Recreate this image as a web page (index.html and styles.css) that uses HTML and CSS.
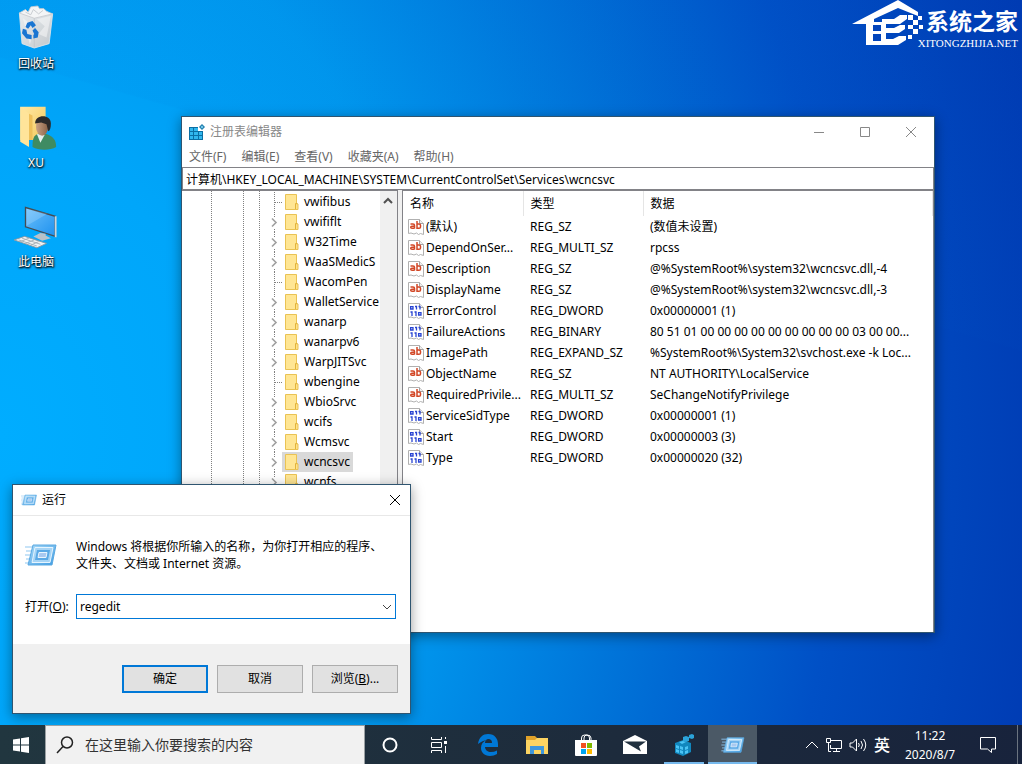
FILE: index.html
```html
<!DOCTYPE html>
<html lang="zh-CN">

<head>
  <meta charset="UTF-8">
  <meta name="viewport" content="width=device-width, initial-scale=1.0">
  <title>注册表编辑器</title>
  <link rel="stylesheet" href="styles.css">
</head>

<body>
  <!-- 图标定义 -->
  <svg class="defs" width="0" height="0" aria-hidden="true">
    <defs>
      <linearGradient id="g-bin" x1="0" y1="0" x2="1" y2="1">
        <stop offset="0" stop-color="#e9edf0"/>
        <stop offset="1" stop-color="#c3c8cc"/>
      </linearGradient>
      <linearGradient id="g-folder" x1="0" y1="0" x2="1" y2="1">
        <stop offset="0" stop-color="#ffe9a6"/>
        <stop offset="1" stop-color="#f3c95c"/>
      </linearGradient>
      <linearGradient id="g-screen" x1="0" y1="0" x2="1" y2="1">
        <stop offset="0" stop-color="#6cc0fb"/>
        <stop offset="1" stop-color="#1d91ef"/>
      </linearGradient>
      <linearGradient id="g-face" x1="0" y1="0" x2="1" y2="0">
        <stop offset="0" stop-color="#c9a184"/>
        <stop offset="1" stop-color="#8a6247"/>
      </linearGradient>
      <linearGradient id="g-run" x1="0" y1="0" x2="1" y2="1">
        <stop offset="0" stop-color="#a9daf8"/>
        <stop offset="1" stop-color="#3e9be2"/>
      </linearGradient>
    </defs>

    <symbol id="i-branch" viewBox="0 0 18 20">
      <path d="M10.500 0v5M10.500 17v3" stroke="#808080" stroke-dasharray="1 1" fill="none"/>
      <path d="M8 6.500l4 4-4 4" stroke="#a0a0a0" stroke-width="1.600" fill="none"/>
    </symbol>
    <symbol id="i-leaf" viewBox="0 0 18 20">
      <path d="M10.500 0v20M11 10.500h7" stroke="#808080" stroke-dasharray="1 1" fill="none"/>
    </symbol>
    <symbol id="i-folder" viewBox="0 0 14 16">
      <path d="M.5.500h11v9.500h1.500v5.500H.5z" fill="#ffe28a" stroke="#eac354"/>
      <path d="M1 1h10v8l-1 6H1z" fill="#ffe694"/>
      <path d="M10.500 15V9.500h2" stroke="#e2b43c" fill="none"/>
    </symbol>
    <symbol id="i-page" viewBox="0 0 16 16">
      <path d="M.5.500h11l4 4v11l-3-1-2 1-2-1.500-2.500 1-3-1-2.500.5z" fill="#fff" stroke="#b0b0b0"/>
      <path d="M11.500.500v4h4" fill="#eee" stroke="#a3a3a3"/>
    </symbol>
    <symbol id="i-string" viewBox="0 0 16 16">
      <use href="#i-page"/>
      <path d="M2.500 5h2.500q1.500 0 1.500 1.500v3M6.500 7.300H4q-1.300 0-1.300 1T4 9.300h2.500M9 2v7.300h2q1.500 0 1.500-1.300V6.300q0-1.300-1.500-1.300H9" stroke="#d24726" stroke-width="1.500" fill="none"/>
    </symbol>
    <symbol id="i-binary" viewBox="0 0 16 16">
      <use href="#i-page"/>
      <path d="M2.600 3.600h2.400v2.400H2.600zM7 3.500h1.500v3M10.500 3.500H12v3M2.500 9H4v4M6.500 9H8v4M10.600 9.600H13V12h-2.400z" stroke="#2743d2" stroke-width="1.300" fill="none"/>
    </symbol>
    <symbol id="i-regedit" viewBox="0 0 16 16">
      <path d="M0 3h14v13H0z" fill="#0b6fa4"/>
      <path d="M1 4h3v3H1zM5 4h4v3H5zM1 8h3v3H1zM5 8h4v3H5zM10 8h3v3h-3zM1 12h3v3H1zM5 12h4v3H5zM10 12h3v3h-3z" fill="#31b7ee"/>
      <path d="M9 2h6v5H9z" fill="#fff"/>
      <path d="M13 0l3 3-3 3-3-3z" fill="#1a78a8"/>
      <path d="M13 1.500L14.500 3 13 4.500 11.500 3z" fill="#7dd0f2"/>
    </symbol>
    <symbol id="i-run" viewBox="0 0 32 22">
      <path d="M0 3h9M1 7h7M0 11h6M1 15h5M0 19h5" stroke="#8fc8f2" stroke-width="1.200"/>
      <path d="M8 1h23l-4 20H3z" fill="url(#g-run)" stroke="#5aa9e2"/>
      <path d="M10 3.500h18l-3 15H7z" fill="#a6d4f5" stroke="#e6f5ff"/>
      <path d="M12 6h13l-2 10H10z" fill="#5aa9e6"/>
      <path d="M14 8.500h8l-1 5h-8z" fill="#a9c9f0" stroke="#e8f5fe"/>
    </symbol>
  </svg>

  <main class="desktop">
    <!-- 桌面图标 -->
    <nav class="shortcuts">
      <a class="shortcut" href="#">
        <svg width="48" height="48" viewBox="0 0 48 48">
          <path d="M5 8l38 1-4 34-17 5L8 43z" fill="url(#g-bin)" stroke="#dfe5ea"/>
          <path d="M5 8l7-4 3 3 3-6 8-1 2 3 5 0 3 3 7 3-21 5z" fill="#f4f5f6" stroke="#c9ccd0"/>
          <path d="M12 7l6 3 3-6 6 5 5-4M22 14v33" stroke="#c2c6ca" fill="none"/>
          <path d="M25 15l9 8-7 9 9 4 5-25zM9 14l8 6-7 8 9 9-2 7" fill="#fff" opacity=".45"/>
          <path d="M14 19l6-2 4 5-4 3-2-3-3 4-3-2zM23 25l4 5-1 6-5 1 0-4 1-1-2-4zM9 26l4 1 1 5 5 1 0 5-6-1-5-6z" fill="#1975d2"/>
        </svg>
        <span>回收站</span>
      </a>
      <a class="shortcut" href="#">
        <svg width="48" height="48" viewBox="0 0 48 48">
          <path d="M6 2h29v38H6z" fill="url(#g-folder)"/>
          <path d="M6 2l10 8v38L6 42z" fill="#ffe49a"/>
          <path d="M16 10v30h4V12z" fill="#eec05a"/>
          <path d="M20 48c0-10 1-13 8-16l8 1c8 3 11 7 11 15-7 4-20 4-27 0z" fill="#3f8b62"/>
          <path d="M25 33l4 10 5-9z" fill="#e8efec"/>
          <ellipse cx="31" cy="25" rx="7" ry="10" fill="url(#g-face)"/>
          <path d="M23 21c0-11 18-11 18 0 0 5-1 8-3 9l-2-8-6-2z" fill="#2d2a29"/>
        </svg>
        <span>XU</span>
      </a>
      <a class="shortcut" href="#">
        <svg width="48" height="48" viewBox="0 0 48 48">
          <path d="M12 4l34 10v23L12 26z" fill="url(#g-screen)" stroke="#444c54" stroke-width="1.500"/>
          <path d="M13 25L37 11l-24-6z" fill="#fff" opacity=".18"/>
          <path d="M46.500 14v24" stroke="#cfd3d6" stroke-width="2"/>
          <path d="M29 33l-8 4 10 5 10-3-6-3v-2z" fill="#b8c1c8"/>
          <path d="M-1 41l12-4 25 8-11 5z" fill="#f0f2f3" stroke="#8d969d"/>
          <path d="M4 41l21 7M8 39l21 7M6 43l10-4M12 45l10-4M18 47l9-4" stroke="#a4adb4"/>
        </svg>
        <span>此电脑</span>
      </a>
    </nav>

    <!-- 水印 -->
    <div class="brand">
      <svg width="72" height="48" viewBox="0 0 72 48">
        <path d="M0 24L46 0l20 12v4L46 8 22 19v3h12v23H14V24z" fill="#fff"/>
        <path d="M30 19h12l6-4h7v4l-7 5H30zM30 28h12l6-3h5v4l-6 4H30zM30 39h11l6-3h7v4l-8 5H30z" fill="#fff"/>
        <path d="M21 25h8v6h-8zM21 34h8v7h-8z" fill="#0345bb"/>
        <path d="M56 15h5v5h-5zM61 20h5v5h-5zM66 16h4v4h-4zM56 25h5v4h-5zM61 29h5v5h-5zM67 25h4v4h-4zM56 35h4v4h-4z" fill="#fff"/>
      </svg>
      <div class="brand-text">
        <strong>系统之家</strong>
        <small>XITONGZHIJIA.NET</small>
      </div>
    </div>

    <!-- 注册表编辑器 -->
    <section class="window regedit">
      <header class="titlebar">
        <svg width="16" height="16"><use href="#i-regedit"/></svg>
        <h1>注册表编辑器</h1>
        <button type="button" aria-label="最小化"><svg width="12" height="12"><path d="M1 6.500h10"/></svg></button>
        <button type="button" aria-label="最大化"><svg width="12" height="12"><path d="M1.500 1.500h9v9h-9z"/></svg></button>
        <button type="button" aria-label="关闭"><svg width="12" height="12"><path d="M1 1l10 10M11 1L1 11"/></svg></button>
      </header>
      <nav class="menubar">
        <a href="#">文件(F)</a>
        <a href="#">编辑(E)</a>
        <a href="#">查看(V)</a>
        <a href="#">收藏夹(A)</a>
        <a href="#">帮助(H)</a>
      </nav>
      <input class="address" type="text" aria-label="地址" value="计算机\HKEY_LOCAL_MACHINE\SYSTEM\CurrentControlSet\Services\wcncsvc">
      <div class="panes">
        <div class="tree">
          <ul>
            <li><svg class="branch"><use href="#i-leaf"/></svg><span><svg class="folder"><use href="#i-folder"/></svg>vwifibus</span></li>
            <li><svg class="branch"><use href="#i-branch"/></svg><span><svg class="folder"><use href="#i-folder"/></svg>vwififlt</span></li>
            <li><svg class="branch"><use href="#i-branch"/></svg><span><svg class="folder"><use href="#i-folder"/></svg>W32Time</span></li>
            <li><svg class="branch"><use href="#i-branch"/></svg><span><svg class="folder"><use href="#i-folder"/></svg>WaaSMedicS</span></li>
            <li><svg class="branch"><use href="#i-leaf"/></svg><span><svg class="folder"><use href="#i-folder"/></svg>WacomPen</span></li>
            <li><svg class="branch"><use href="#i-branch"/></svg><span><svg class="folder"><use href="#i-folder"/></svg>WalletService</span></li>
            <li><svg class="branch"><use href="#i-branch"/></svg><span><svg class="folder"><use href="#i-folder"/></svg>wanarp</span></li>
            <li><svg class="branch"><use href="#i-branch"/></svg><span><svg class="folder"><use href="#i-folder"/></svg>wanarpv6</span></li>
            <li><svg class="branch"><use href="#i-branch"/></svg><span><svg class="folder"><use href="#i-folder"/></svg>WarpJITSvc</span></li>
            <li><svg class="branch"><use href="#i-leaf"/></svg><span><svg class="folder"><use href="#i-folder"/></svg>wbengine</span></li>
            <li><svg class="branch"><use href="#i-branch"/></svg><span><svg class="folder"><use href="#i-folder"/></svg>WbioSrvc</span></li>
            <li><svg class="branch"><use href="#i-branch"/></svg><span><svg class="folder"><use href="#i-folder"/></svg>wcifs</span></li>
            <li><svg class="branch"><use href="#i-branch"/></svg><span><svg class="folder"><use href="#i-folder"/></svg>Wcmsvc</span></li>
            <li class="selected"><svg class="branch"><use href="#i-branch"/></svg><span><svg class="folder"><use href="#i-folder"/></svg>wcncsvc</span></li>
            <li><svg class="branch"><use href="#i-branch"/></svg><span><svg class="folder"><use href="#i-folder"/></svg>wcnfs</span></li>
          </ul>
          <div class="scrollbar">
            <svg width="10" height="8"><path d="M1 6l4-4 4 4" fill="none" stroke="#505050" stroke-width="2"/></svg>
          </div>
        </div>
        <div class="values">
          <table>
            <thead>
              <tr><th class="col-name">名称</th><th class="col-type">类型</th><th>数据</th></tr>
            </thead>
            <tbody>
              <tr><td><svg><use href="#i-string"/></svg>(默认)</td><td>REG_SZ</td><td>(数值未设置)</td></tr>
              <tr><td><svg><use href="#i-string"/></svg>DependOnSer...</td><td>REG_MULTI_SZ</td><td>rpcss</td></tr>
              <tr><td><svg><use href="#i-string"/></svg>Description</td><td>REG_SZ</td><td>@%SystemRoot%\system32\wcncsvc.dll,-4</td></tr>
              <tr><td><svg><use href="#i-string"/></svg>DisplayName</td><td>REG_SZ</td><td>@%SystemRoot%\system32\wcncsvc.dll,-3</td></tr>
              <tr><td><svg><use href="#i-binary"/></svg>ErrorControl</td><td>REG_DWORD</td><td>0x00000001 (1)</td></tr>
              <tr><td><svg><use href="#i-binary"/></svg>FailureActions</td><td>REG_BINARY</td><td>80 51 01 00 00 00 00 00 00 00 00 00 03 00 00...</td></tr>
              <tr><td><svg><use href="#i-string"/></svg>ImagePath</td><td>REG_EXPAND_SZ</td><td>%SystemRoot%\System32\svchost.exe -k Loc...</td></tr>
              <tr><td><svg><use href="#i-string"/></svg>ObjectName</td><td>REG_SZ</td><td>NT AUTHORITY\LocalService</td></tr>
              <tr><td><svg><use href="#i-string"/></svg>RequiredPrivile...</td><td>REG_MULTI_SZ</td><td>SeChangeNotifyPrivilege</td></tr>
              <tr><td><svg><use href="#i-binary"/></svg>ServiceSidType</td><td>REG_DWORD</td><td>0x00000001 (1)</td></tr>
              <tr><td><svg><use href="#i-binary"/></svg>Start</td><td>REG_DWORD</td><td>0x00000003 (3)</td></tr>
              <tr><td><svg><use href="#i-binary"/></svg>Type</td><td>REG_DWORD</td><td>0x00000020 (32)</td></tr>
            </tbody>
          </table>
        </div>
      </div>
    </section>

    <!-- 运行对话框 -->
    <form class="window run">
      <header class="titlebar">
        <svg width="16" height="12"><use href="#i-run"/></svg>
        <h2>运行</h2>
        <button type="button" aria-label="关闭"><svg width="12" height="12"><path d="M1 1l10 10M11 1L1 11"/></svg></button>
      </header>
      <div class="run-body">
        <div class="run-hint">
          <svg width="32" height="22"><use href="#i-run"/></svg>
          <p>Windows 将根据你所输入的名称，为你打开相应的程序、<br>文件夹、文档或 Internet 资源。</p>
        </div>
        <div class="run-field">
          <label for="cmd">打开(<u>O</u>):</label>
          <div class="combo">
            <input id="cmd" type="text" value="regedit">
            <svg width="10" height="8"><path d="M1 2l4 4 4-4" fill="none" stroke="#444"/></svg>
          </div>
        </div>
      </div>
      <footer class="run-actions">
        <button type="submit" class="default">确定</button>
        <button type="button">取消</button>
        <button type="button">浏览(<u>B</u>)...</button>
      </footer>
    </form>
  </main>

  <!-- 任务栏 -->
  <footer class="taskbar">
    <button type="button" class="start" aria-label="开始">
      <svg width="16" height="16"><path d="M0 2.500L7 1.500V7.500H0zM8 1.300L16 0v7.500H8zM0 8.500h7v6l-7-1zM8 8.500h8V16l-8-1.200z" fill="#fff"/></svg>
    </button>
    <div class="search">
      <svg width="18" height="18"><circle cx="11" cy="6.500" r="5.500"/><path d="M7 10.500L1 17"/></svg>
      <input type="text" aria-label="搜索" placeholder="在这里输入你要搜索的内容">
    </div>
    <div class="apps">
      <button type="button" aria-label="Cortana"><svg width="16" height="16"><circle cx="8" cy="8" r="6.500" fill="none" stroke="#fff" stroke-width="2"/></svg></button>
      <button type="button" aria-label="任务视图">
        <svg width="18" height="16"><path d="M1.500 0v2.500h10V0M1.500 5.500h10v5h-10zM1.500 16v-2.500h10V16M15.500 0v2M15.500 9v7" fill="none" stroke="#fff"/><path d="M14 4h3v3h-3z" fill="#fff"/></svg>
      </button>
      <button type="button" aria-label="Edge">
        <svg width="22" height="22"><path d="M1 10C2 3 6 0 11 0c7 0 10 5 10 10v3H8c0 3 3 5 6 5 2 0 4-.5 6-1.500V20c-2 1.300-4.500 2-7 2-6 0-9-4-9-8 0-4 2-6.500 6-8-3 .5-6 1.500-9 4zM8 9h7c0-3-1.500-4-3.500-4S8.200 6.500 8 9z" fill="#0078d7"/></svg>
      </button>
      <button type="button" aria-label="文件资源管理器">
        <svg width="22" height="18"><path d="M0 0h9l2 2h10v15H0z" fill="#e0a22a"/><path d="M0 4h9l2-2h11v16H0z" fill="#fcd462"/><path d="M4 18v-8h14v8h-3v-4H8v4z" fill="#3e97dc"/></svg>
      </button>
      <button type="button" aria-label="应用商店">
        <svg width="24" height="22"><path d="M7.500 8V4q0-3 3-3h2q3 0 3 3v4M10 8V4q0-3 3-3 4 0 4 3v3" fill="none" stroke="#fff"/><path d="M1 6h22v15q0 1-1 1H2q-1 0-1-1z" fill="#fff"/><path d="M7 9h5v5H7z" fill="#f25022"/><path d="M13 9h5v5h-5z" fill="#7fba00"/><path d="M7 15h5v5H7z" fill="#00a4ef"/><path d="M13 15h5v5h-5z" fill="#ffb900"/></svg>
      </button>
      <button type="button" aria-label="邮件">
        <svg width="24" height="19"><path d="M0 6L12 0l12 6v13H0z" fill="#fff"/><path d="M1 6.500l22 0-7 5 2 5z" fill="#20303f"/></svg>
      </button>
      <button type="button" class="open" aria-label="注册表编辑器">
        <svg width="20" height="22"><path d="M1 9l8-3 8 3v9l-8 4-8-3z" fill="#1187be"/><path d="M2 11l3 1v3l-3-1zM6 12l3 1v3l-3-1zM2 15l3 1v3l-3-1zM6 16l3 1v3l-3-1zM11 13l3-1v3l-3 1zM11 17l3-1v3l-3 1zM5 8l4-1 3 1-4 2z" fill="#4bc4f5"/><path d="M9 3l3-1 3 1v4l-3 1-3-1zM15 1l3-1 2 1v3l-2 1-3-1z" fill="#2ba3da"/></svg>
      </button>
      <button type="button" class="open active" aria-label="运行">
        <svg width="24" height="16"><use href="#i-run"/></svg>
      </button>
    </div>
    <div class="tray">
      <svg width="14" height="8"><path d="M1 7l6-6 6 6"/></svg>
      <svg width="16" height="14"><path d="M5 2.500h10.500v8H4.500V7M10.500 10.500v3M7 13.500h7M.5.500h4v4h-4zM2.500 5v8.500H5"/></svg>
      <svg width="18" height="14"><path d="M1 5h2.500l4-4v12l-4-4H1zM9.500 5q1.500 2 0 4M12 3q3 4 0 8M14.500 1q4.500 6 0 12"/></svg>
      <span class="ime">英</span>
      <time datetime="2020-08-07T11:22">11:22<br>2020/8/7</time>
      <svg class="notice" width="18" height="16"><path d="M1.500.500h15v11.500h-4V15.500L8.500 12h-7z"/></svg>
      <button type="button" class="show-desktop" aria-label="显示桌面"></button>
    </div>
  </footer>
</body>

</html>
```
FILE: styles.css
```css
/* 全局 */
* {
  box-sizing: border-box;
}

body {
  display: flex;
  flex-direction: column;
  height: 100vh;
  margin: 0;
  overflow: hidden;
  font: 12px/16px "Noto Sans", "Noto Sans CJK SC", sans-serif;
  color: #000;
}

button,
input {
  font: inherit;
  color: inherit;
}

a {
  color: inherit;
  text-decoration: none;
}

h1,
h2,
p,
ul {
  margin: 0;
  padding: 0;
  font: inherit;
}

.defs {
  position: absolute;
}

/* 桌面 */
.desktop {
  position: relative;
  flex: 1;
  overflow: hidden;
  background:
    linear-gradient(196deg, rgba(0, 90, 200, .04) 336px, rgba(0, 90, 200, 0) 338px),
    radial-gradient(ellipse 100% 180% at 0 60%, #00adff 0, #00a6fa 22%, #0098ee 42%, #006fd6 65%, #0050c6 82%, #003ab2 105%);
}

.shortcuts {
  display: flex;
  flex-direction: column;
  gap: 33px;
  width: 72px;
  padding-top: 6px;
}

.shortcut {
  display: flex;
  flex-direction: column;
  align-items: center;
  gap: 8px;
  color: #fff;
  text-shadow: 0 1px 2px #000, 1px 1px 2px #000;
}

.shortcut svg {
  width: 42px;
  height: 42px;
  overflow: visible;
}

.brand {
  position: absolute;
  top: 0;
  right: 4px;
  display: flex;
  color: #fff;
}

.brand-text {
  display: flex;
  flex-direction: column;
  align-items: flex-end;
  margin-left: -6px;
  padding-top: 3px;
}

.brand strong {
  font: bold 23px/34px "Noto Sans CJK SC", sans-serif;
}

.brand small {
  font: 11px/12px "Liberation Serif", serif;
}

/* 窗口 */
.window {
  position: absolute;
  display: flex;
  flex-direction: column;
  background: #fff;
  border: 1px solid #2f5570;
  box-shadow: 0 3px 12px rgba(0, 0, 0, .4);
}

.titlebar {
  display: flex;
  align-items: center;
}

.titlebar h1,
.titlebar h2 {
  flex: 1;
  padding-left: 5px;
}

.titlebar button {
  display: grid;
  place-items: center;
  padding: 0;
  border: 0;
  background: none;
}

.titlebar button svg {
  fill: none;
  stroke: currentColor;
}

/* 注册表编辑器 */
.regedit {
  top: 116px;
  right: 87px;
  bottom: 92px;
  left: 181px;
}

.regedit .titlebar {
  height: 30px;
  padding-left: 7px;
  color: #888;
}

.regedit .titlebar button {
  width: 46px;
  height: 28px;
}

.menubar {
  display: flex;
  gap: 15px;
  height: 20px;
  padding: 2px 7px;
  color: #666;
}

.address {
  height: 23px;
  padding: 0 3px;
  border: 1px solid #828287;
  outline: 0;
}

.panes {
  flex: 1;
  display: flex;
  gap: 4px;
  min-height: 0;
  background: #f0f0f0;
}

.tree,
.values {
  background: #fff;
  border: 1px solid #828287;
  border-width: 1px 1px 0;
}

.tree {
  display: flex;
  width: 216px;
  border-left: 0;
}

.tree ul {
  flex: 1;
  min-width: 0;
  padding-top: 1px;
  overflow: hidden;
  list-style: none;
  background:
    repeating-linear-gradient(#808080 0 1px, #fff 1px 2px) 29px 0 / 1px 100% no-repeat,
    repeating-linear-gradient(#808080 0 1px, #fff 1px 2px) 61px 0 / 1px 100% no-repeat,
    repeating-linear-gradient(#808080 0 1px, #fff 1px 2px) 77px 0 / 1px 100% no-repeat;
}

.tree li {
  display: flex;
  height: 20px;
  padding-left: 82px;
  white-space: nowrap;
}

.tree li span {
  display: flex;
  align-items: center;
  padding: 0 3px;
  gap: 5px;
}

.tree .selected span {
  background: #d9d9d9;
}

.branch {
  flex: none;
  width: 18px;
  height: 20px;
}

.folder {
  flex: none;
  width: 14px;
  height: 16px;
}

.scrollbar {
  width: 17px;
  padding: 6px 3px;
  background: #f0f0f0;
}

.scrollbar svg {
  display: block;
}

.values {
  flex: 1;
  min-width: 0;
}

.values table {
  width: 100%;
  table-layout: fixed;
  border-collapse: collapse;
}

.values th {
  height: 25px;
  padding: 0 7px;
  border-right: 1px solid #e5e5e5;
  font-weight: normal;
  text-align: left;
}

.values td {
  height: 21px;
  padding: 0 0 0 7px;
  white-space: nowrap;
}

.values td:first-child {
  padding-left: 5px;
}

.values td svg {
  width: 16px;
  height: 16px;
  margin-right: 2px;
  vertical-align: top;
}

.col-name,
.col-type {
  width: 120px;
}

/* 运行对话框 */
.run {
  bottom: 11px;
  left: 12px;
  width: 399px;
}

.run .titlebar {
  height: 31px;
  padding-left: 8px;
  border-bottom: 1px solid #e8e8e8;
}

.run .titlebar button {
  width: 30px;
  height: 28px;
}

.run-body {
  padding: 22px 14px 25px 12px;
}

.run-hint {
  display: flex;
  align-items: center;
  gap: 19px;
  line-height: 17px;
}

.run-field {
  display: flex;
  align-items: center;
  padding-top: 22px;
}

.run-field label {
  width: 51px;
}

.combo {
  display: flex;
  flex: 1;
  align-items: center;
  height: 25px;
  padding: 0 3px;
  border: 1px solid #0078d7;
}

.combo input {
  flex: 1;
  min-width: 0;
  padding: 0;
  border: 0;
  outline: 0;
}

.run-actions {
  display: flex;
  justify-content: flex-end;
  gap: 9px;
  padding: 21px 12px 20px;
  background: #f0f0f0;
}

.run-actions button {
  width: 86px;
  height: 28px;
  padding: 0;
  border: 1px solid #adadad;
  background: #e1e1e1;
}

.run-actions .default {
  border: 2px solid #0078d7;
}

/* 任务栏 */
.taskbar {
  display: flex;
  height: 39px;
  background: linear-gradient(90deg, #21363f, #1d2b3c 60%, #18233c);
  color: #fff;
}

.taskbar button {
  display: grid;
  place-items: center;
  padding: 0;
  border: 0;
  background: none;
}

.taskbar .start {
  width: 45px;
  padding-right: 4px;
}

.search {
  display: flex;
  align-items: center;
  gap: 11px;
  width: 320px;
  padding: 0 10px;
  background: #f1f1f1;
  border: 1px solid #9aa0a3;
  border-bottom: 0;
}

.search svg {
  fill: none;
  stroke: #222;
  stroke-width: 1.500;
}

.search input {
  flex: 1;
  min-width: 0;
  padding: 0;
  border: 0;
  background: none;
  font-size: 14px;
}

.search input::placeholder {
  color: #333;
}

.apps {
  display: flex;
}

.taskbar .apps button {
  width: 49px;
}

.taskbar .apps .open {
  background: linear-gradient(#76b9ed, #76b9ed) center bottom / 40px 2px no-repeat;
}

.taskbar .apps .active {
  background-color: #4b5966;
  background-size: 100% 2px;
}

.tray {
  display: flex;
  align-items: center;
  gap: 7px;
  margin-left: auto;
}

.tray svg {
  fill: none;
  stroke: #fff;
}

.ime {
  font-size: 16px;
  font-weight: 500;
}

.tray time {
  width: 66px;
  line-height: 19px;
  text-align: center;
}

.notice {
  margin: 0 13px 0 9px;
}

.taskbar .show-desktop {
  width: 5px;
  height: 39px;
  border-left: 1px solid #6b7480;
}
```
